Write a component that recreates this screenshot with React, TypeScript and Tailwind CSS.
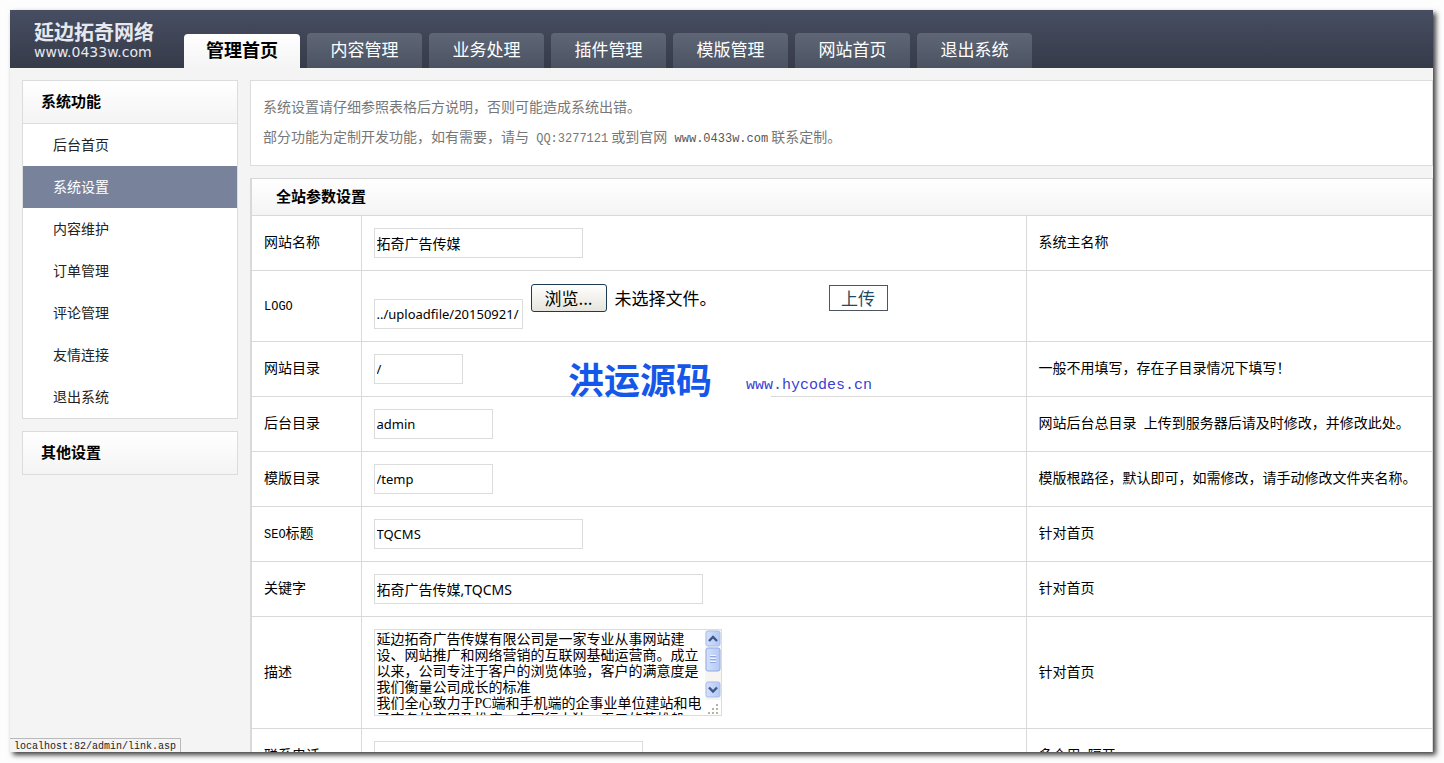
import type { ReactNode } from "react";

const tabs = ["管理首页", "内容管理", "业务处理", "插件管理", "模版管理", "网站首页", "退出系统"];
const menu = ["后台首页", "系统设置", "内容维护", "订单管理", "评论管理", "友情连接", "退出系统"];

const field =
  "h-[30px] border border-[#dcdcdc] bg-white px-0.5 text-black outline-none font-['Noto_Sans','Noto_Sans_CJK_SC',sans-serif]";

const description =
  "延边拓奇广告传媒有限公司是一家专业从事网站建设、网站推广和网络营销的互联网基础运营商。成立以来，公司专注于客户的浏览体验，客户的满意度是我们衡量公司成长的标准\n我们全心致力于PC端和手机端的企事业单位建站和电子商务的应用及推广，在同行中独一无二的英雄般";

function Mono({ children }: { children: ReactNode }) {
  return <span className="font-['Liberation_Mono',monospace] text-xs whitespace-pre">{children}</span>;
}

function Row({ id, label, note, children }: { id: string; label: ReactNode; note?: ReactNode; children: ReactNode }) {
  return (
    <tr className="border-b border-[#d9d9d9]">
      <th scope="row" className="border-r border-[#d9d9d9] px-3 pb-1 text-left align-middle font-normal">
        <label htmlFor={id}>{label}</label>
      </th>
      <td className="border-r border-[#d9d9d9] px-3 py-3 align-middle">{children}</td>
      <td className="px-3 pb-1 align-middle whitespace-nowrap">{note}</td>
    </tr>
  );
}

function ScrollBar() {
  return (
    <svg width="16" height="70" viewBox="0 0 16 70" aria-hidden="true">
      <defs>
        <linearGradient id="thumb" x1="0" x2="1" y1="0" y2="0">
          <stop offset="0" stopColor="#d3e0fd" />
          <stop offset="1" stopColor="#b4c8f6" />
        </linearGradient>
      </defs>
      <rect width="16" height="70" fill="#f6f5f1" />
      <rect x="1" y="1" width="14" height="15" rx="2" fill="url(#thumb)" stroke="#a9bdea" />
      <path d="M4 11l4-4 4 4" fill="none" stroke="#3d5685" strokeWidth="2.4" />
      <rect x="1" y="18" width="14" height="23" rx="2" fill="url(#thumb)" stroke="#8faae0" />
      <path d="M5 25.5h6M5 28.5h6M5 31.5h6" stroke="#f1f5ff" />
      <path d="M5 26.5h6M5 29.5h6M5 32.5h6" stroke="#8ea8dc" />
      <rect x="1" y="52" width="14" height="15" rx="2" fill="url(#thumb)" stroke="#a9bdea" />
      <path d="M4 57.5l4 4 4-4" fill="none" stroke="#3d5685" strokeWidth="2.4" />
    </svg>
  );
}

function Grip() {
  return (
    <svg width="12" height="12" viewBox="0 0 12 12" fill="#b8b4a4" aria-hidden="true">
      <path d="M9 1h2v2H9zM5 5h2v2H5zM9 5h2v2H9zM1 9h2v2H1zM5 9h2v2H5zM9 9h2v2H9z" />
    </svg>
  );
}

export default function App() {
  return (
    <div className="h-screen bg-[#fdfdfd] pt-[10px] pr-[11px] pb-[11px] pl-[10px] font-['Noto_Sans_CJK_SC',sans-serif] text-sm text-black">
      <div className="relative flex h-full flex-col overflow-hidden bg-[#f4f4f4] shadow-[3px_3px_5px_0px_rgba(0,0,0,0.75)]">
        <header className="flex h-[58px] shrink-0 items-end bg-linear-to-b from-[#474e62] to-[#363b49]">
          <a href="#home" className="flex h-full w-[174px] shrink-0 flex-col pt-2 pl-6 text-[#e6e8ee]">
            <span className="text-xl leading-7 font-bold">延边拓奇网络</span>
            <span className="font-['DejaVu_Sans',sans-serif] text-sm leading-3">www.0433w.com</span>
          </a>
          <nav className="flex items-end gap-[7px]">
            {tabs.map((t, i) => (
              <a
                key={t}
                href="#tab"
                className={
                  i === 0
                    ? "flex h-[34px] w-[116px] items-center justify-center rounded-t-sm bg-linear-to-b from-white to-[#f4f4f4] pb-1 text-lg font-bold"
                    : "flex h-[35px] w-[115px] items-center justify-center rounded-t-sm bg-linear-to-b from-[#5f6776] to-[#4b5261] pb-0.5 text-[17px] text-white"
                }
              >
                {t}
              </a>
            ))}
          </nav>
        </header>

        <div className="flex min-h-0 grow overflow-hidden pt-3 pl-3">
          <aside className="flex w-[216px] shrink-0 flex-col gap-3">
            <section className="border border-[#dcdcdc] bg-white">
              <h2 className="flex h-[43px] items-center border-b border-[#dcdcdc] bg-linear-to-b from-white to-[#f4f4f4] px-[18px] pb-0.5 text-[15px] font-bold">
                系统功能
              </h2>
              <ul>
                {menu.map((m, i) => (
                  <li key={m}>
                    <a
                      href="#menu"
                      className={
                        i === 1
                          ? "flex h-[42px] items-center bg-[#78839b] pb-0.5 pl-[30px] text-white"
                          : "flex h-[42px] items-center pb-0.5 pl-[30px] text-[#222222]"
                      }
                    >
                      {m}
                    </a>
                  </li>
                ))}
              </ul>
            </section>
            <section className="border border-[#dcdcdc] bg-white">
              <h2 className="flex h-[42px] items-center bg-linear-to-b from-white to-[#f4f4f4] px-[18px] pb-0.5 text-[15px] font-bold">
                其他设置
              </h2>
            </section>
          </aside>

          <main className="flex min-w-0 grow flex-col gap-3 pl-3">
            <section className="h-[86px] shrink-0 border border-[#dcdcdc] bg-white px-3 pt-[10px] leading-[30px] text-[#777777]">
              <p>系统设置请仔细参照表格后方说明，否则可能造成系统出错。</p>
              <p>
                部分功能为定制开发功能，如有需要，请与<Mono>{" QQ:3277121"}</Mono> 或到官网
                <Mono> </Mono>
                <a href="#site" className="text-[#555555]">
                  <Mono>www.0433w.com</Mono>
                </a>{" "}
                联系定制。
              </p>
            </section>

            <section className="relative border border-l-2 border-[#d9d9d9] bg-white">
              <h2 className="flex h-[37px] items-center border-b border-[#d9d9d9] bg-linear-to-b from-white to-[#f4f4f4] px-6 pb-0.5 text-[15px] font-bold">
                全站参数设置
              </h2>
              <table className="w-full table-fixed border-collapse">
                <colgroup>
                  <col className="w-[109px]" />
                  <col />
                  <col className="w-[406px]" />
                </colgroup>
                <tbody>
                  <Row id="name" label="网站名称" note="系统主名称">
                    <input id="name" defaultValue="拓奇广告传媒" className={`${field} block w-[209px] text-sm`} />
                  </Row>
                  <Row id="logo" label={<Mono>LOGO</Mono>}>
                    <div className="flex h-[46px] items-start gap-2">
                      <input id="logo" defaultValue="../uploadfile/20150921/" className={`${field} w-[149px] self-end text-[13px]`} />
                      <div className="flex items-center gap-2 pt-px">
                        <button
                          type="button"
                          className="h-7 w-[76px] rounded-[3px] border border-[#1c3b52] bg-linear-to-b from-white to-[#e6e4dc] text-[17px] leading-6"
                        >
                          浏览...
                        </button>
                        <span className="w-[206px] text-[17px] leading-7">未选择文件。</span>
                        <button
                          type="button"
                          className="h-[26px] w-[59px] border border-[#4c5560] bg-white text-[17px] leading-6 text-[#1d4a66]"
                        >
                          上传
                        </button>
                      </div>
                    </div>
                  </Row>
                  <Row id="dir" label="网站目录" note="一般不用填写，存在子目录情况下填写！">
                    <input id="dir" defaultValue="/" className={`${field} block w-[89px] text-[13px]`} />
                  </Row>
                  <Row
                    id="admin"
                    label="后台目录"
                    note={<>网站后台总目录<Mono> </Mono>上传到服务器后请及时修改，并修改此处。</>}
                  >
                    <input id="admin" defaultValue="admin" className={`${field} block w-[119px] text-[13px]`} />
                  </Row>
                  <Row id="temp" label="模版目录" note="模版根路径，默认即可，如需修改，请手动修改文件夹名称。">
                    <input id="temp" defaultValue="/temp" className={`${field} block w-[119px] text-[13px]`} />
                  </Row>
                  <Row id="seo" label={<><Mono>SEO</Mono>标题</>} note="针对首页">
                    <input id="seo" defaultValue="TQCMS" className={`${field} block w-[209px] text-[13px]`} />
                  </Row>
                  <Row id="keys" label="关键字" note="针对首页">
                    <input id="keys" defaultValue="拓奇广告传媒,TQCMS" className={`${field} block w-[329px] text-sm`} />
                  </Row>
                  <Row id="desc" label="描述" note="针对首页">
                    <div className="flex h-[87px] w-[348px] border border-[#dcdcdc] bg-white">
                      <textarea
                        id="desc"
                        defaultValue={description}
                        className="h-full min-w-0 grow resize-none overflow-hidden pt-0.5 pl-0.5 font-['Liberation_Serif','Noto_Sans_CJK_SC',serif] text-sm leading-4 outline-none"
                      />
                      <div className="flex w-4 shrink-0 flex-col items-center justify-between">
                        <ScrollBar />
                        <Grip />
                      </div>
                    </div>
                  </Row>
                  <Row id="phone" label="联系电话" note={<>多个用<Mono>,</Mono>隔开</>}>
                    <input id="phone" className={`${field} block w-[269px] text-sm`} />
                  </Row>
                </tbody>
              </table>

              <div className="pointer-events-none absolute top-[181px] left-[316px] flex items-center gap-[34px] whitespace-nowrap">
                <span className="absolute right-[101px] -bottom-1 h-3 w-36 bg-white" />
                <span className="relative text-4xl leading-9 font-bold text-[#1557e8]">洪运源码</span>
                <span className="relative pt-4 font-['Liberation_Mono',monospace] text-[15px] leading-5 text-[#3b3fd0]">www.hycodes.cn</span>
              </div>
            </section>
          </main>
        </div>

        <div className="absolute bottom-0 left-0 h-[14px] border border-b-0 border-l-0 border-[#b9b9b9] bg-[#f4f4f4] px-1 font-['Liberation_Mono',monospace] text-[10px] leading-4 text-[#222222]">
          localhost:82/admin/link.asp
        </div>
      </div>
    </div>
  );
}
